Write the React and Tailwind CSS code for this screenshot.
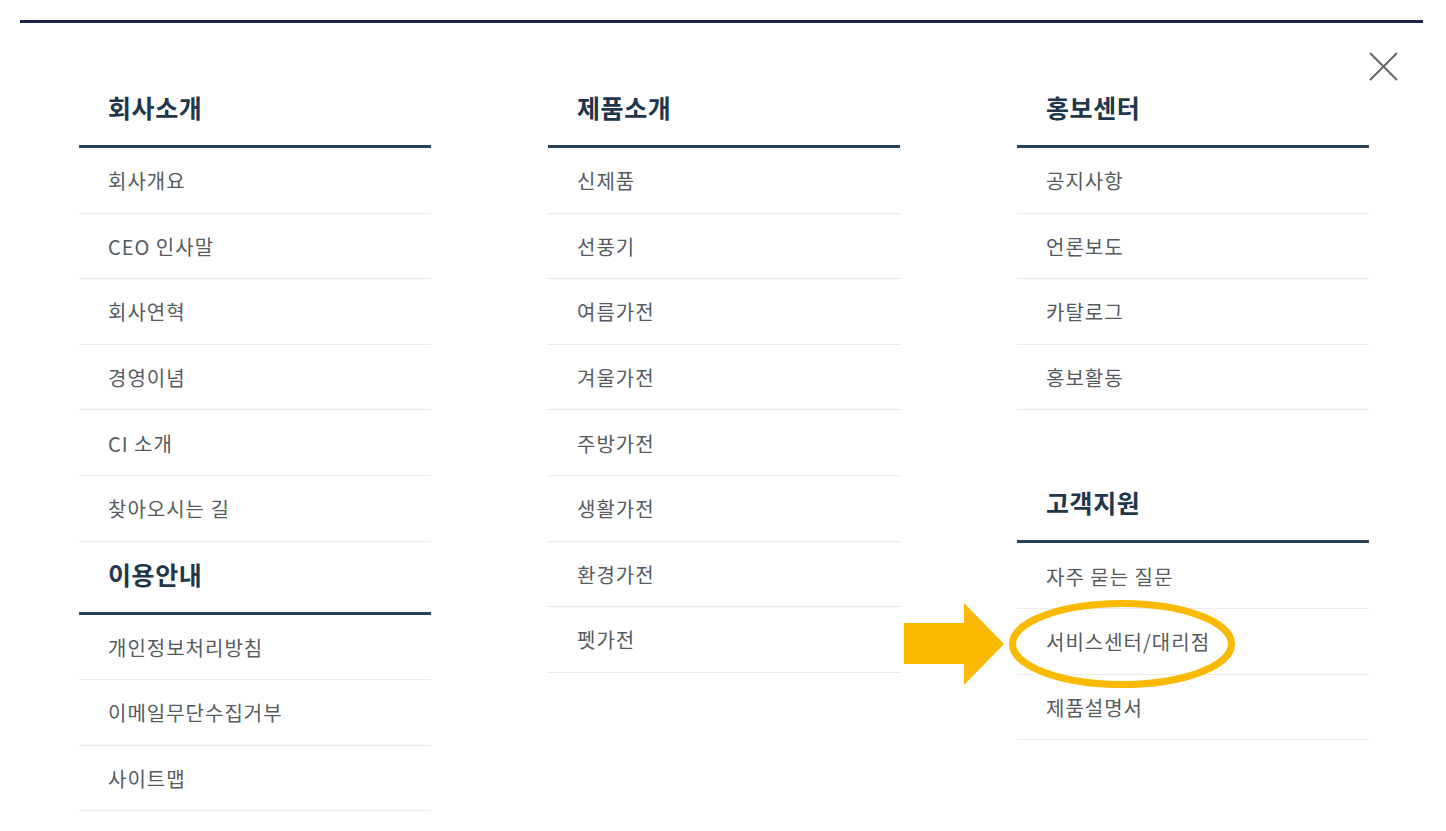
import React from 'react';

const columns = [
  [
    { title: '회사소개', items: ['회사개요', 'CEO 인사말', '회사연혁', '경영이념', 'CI 소개', '찾아오시는 길'] },
    { title: '이용안내', items: ['개인정보처리방침', '이메일무단수집거부', '사이트맵'] },
  ],
  [
    { title: '제품소개', items: ['신제품', '선풍기', '여름가전', '겨울가전', '주방가전', '생활가전', '환경가전', '펫가전'] },
  ],
  [
    { title: '홍보센터', items: ['공지사항', '언론보도', '카탈로그', '홍보활동'] },
    { title: '고객지원', items: ['자주 묻는 질문', '서비스센터/대리점', '제품설명서'], gap: true },
  ],
];

const MenuGroup = ({ title, items, gap }) => (
  <div className={gap ? 'mt-[60px]' : ''}>
    <div className="h-[73px] border-b-[3px] border-[#2a4357] pl-[29px] pt-[20px]">
      <h3 className="text-[25px] leading-[25px] tracking-[0.6px] font-bold text-[#1f364b]">{title}</h3>
    </div>
    <ul>
      {items.map((item) => (
        <li key={item} className="h-[65.6px] border-b border-[#e9ebec] pl-[29px] pt-[2px] flex items-center text-[20px] tracking-[1px] text-[#555b60]">
          {item}
        </li>
      ))}
    </ul>
  </div>
);

export default function App() {
  return (
    <div className="relative min-h-[831px] bg-white pl-5 pr-[23px] pt-5 font-['Noto_Sans_CJK_KR','Noto_Sans',sans-serif]">
      <div className="border-t-[3px] border-[#1c2747]" />

      {/* close button */}
      <button className="absolute top-[52px] right-[48px] w-[29px] h-[29px]" aria-label="닫기">
        <svg viewBox="0 0 29 29" width="29" height="29" fill="none" stroke="#666" strokeWidth="2">
          <path d="M1 1 L28 28 M28 1 L1 28" />
        </svg>
      </button>

      <div className="flex gap-[117px] pl-[59px] pt-[52px]">
        {columns.map((groups, i) => (
          <div key={i} className="w-[352px]">
            {groups.map((g) => (
              <MenuGroup key={g.title} {...g} />
            ))}
          </div>
        ))}
      </div>

      {/* highlight annotation */}
      <svg className="absolute left-0 top-0 pointer-events-none" width="1446" height="831">
        <polygon points="904,623 964,623 964,603 1004,644 964,685 964,664 904,664" fill="#fbb900" />
        <ellipse cx="1122" cy="644" rx="109.5" ry="40.5" fill="none" stroke="#fbb900" strokeWidth="7" />
      </svg>
    </div>
  );
}
